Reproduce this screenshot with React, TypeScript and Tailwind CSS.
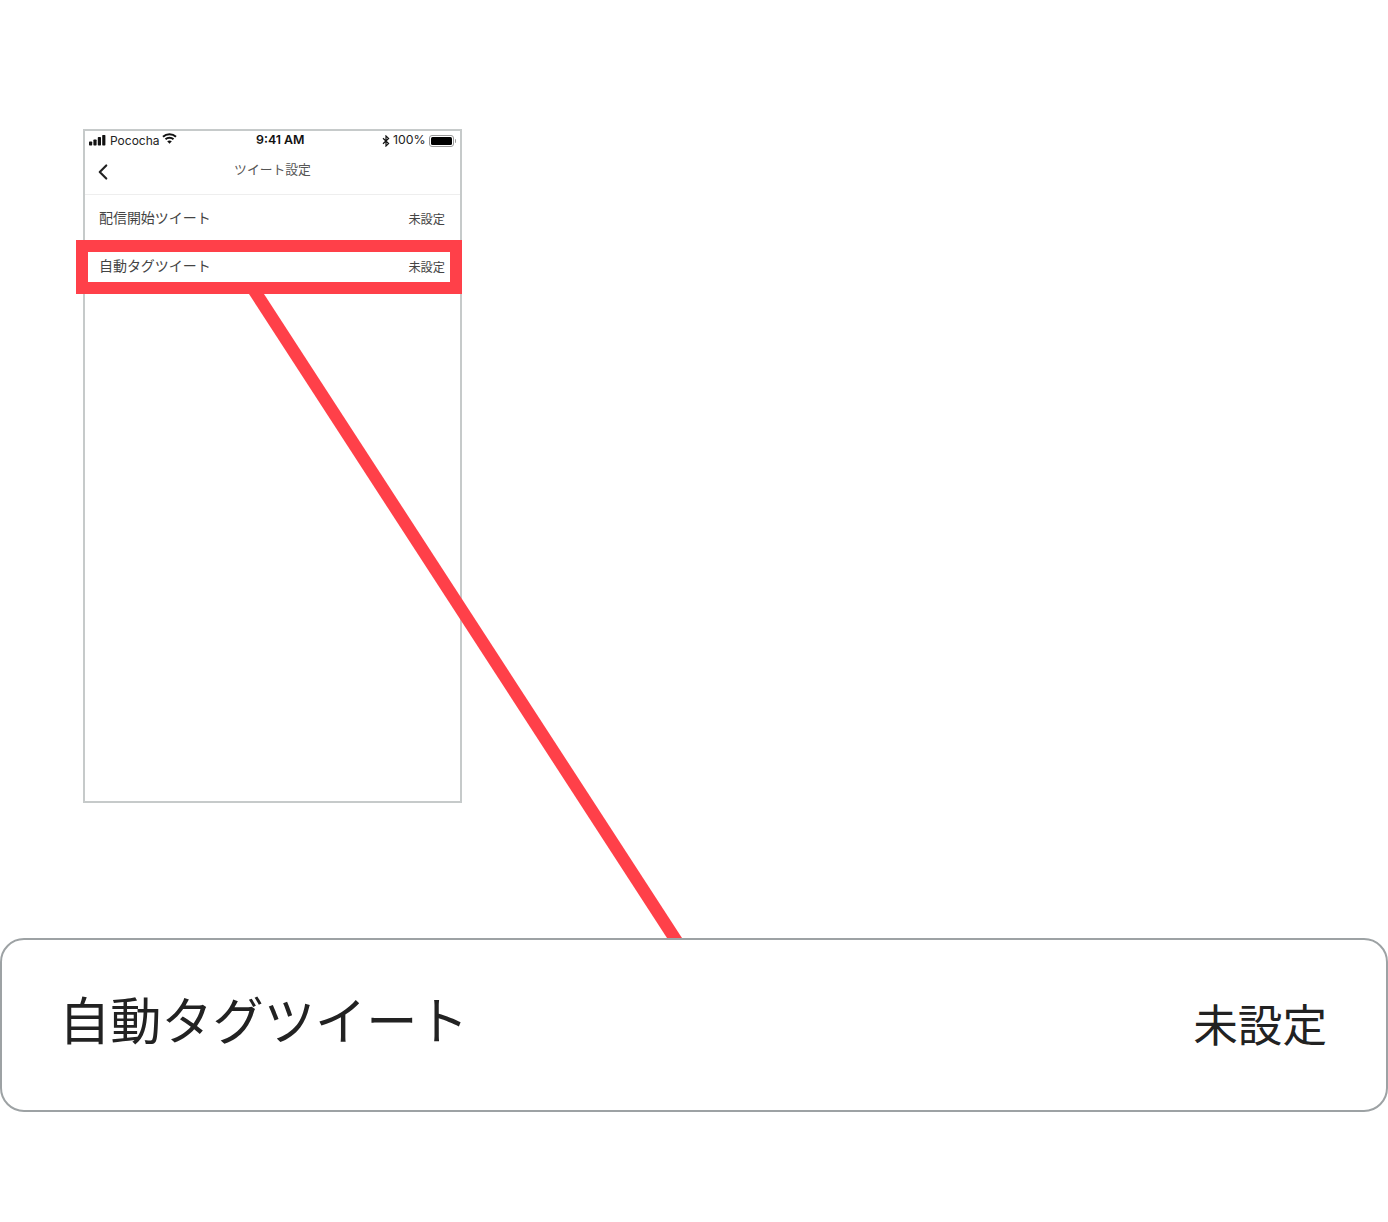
import { ChevronLeft } from "lucide-react";

const jpFont = "font-['Noto_Sans_CJK_JP','Hiragino_Sans',sans-serif]";

function SignalIcon() {
  return (
    <svg width="17" height="11" viewBox="0 0 17 11" fill="#111">
      <rect x="0" y="6.5" width="3.2" height="4" rx="0.7" />
      <rect x="4.4" y="4.5" width="3.2" height="6" rx="0.7" />
      <rect x="8.8" y="2" width="3.2" height="8.5" rx="0.7" />
      <rect x="13.2" y="0" width="3.2" height="10.5" rx="0.7" />
    </svg>
  );
}

function WifiIcon() {
  return (
    <svg width="15" height="11" viewBox="0 0 15 11" fill="none" stroke="#111" strokeWidth="2">
      <path d="M1 3.8C4.6 0.4 10.4 0.4 14 3.8" />
      <path d="M3.5 6.2C5.7 4.2 9.3 4.2 11.5 6.2" />
      <path d="M7.5 10.8L5.2 8.3C6.5 7.3 8.5 7.3 9.8 8.3Z" fill="#111" stroke="none" />
    </svg>
  );
}

function BluetoothIcon() {
  return (
    <svg width="8" height="12" viewBox="0 0 8 12" fill="none" stroke="#111" strokeWidth="1.2">
      <path d="M1 3.2L6.6 8.6L4 11V1L6.6 3.4L1 8.8" />
    </svg>
  );
}

function BatteryIcon() {
  return (
    <div className="flex items-center">
      <div className="w-[25px] h-[12px] rounded-[3px] border border-[#999] p-[1px]">
        <div className="w-full h-full rounded-[1.5px] bg-black" />
      </div>
      <div className="w-[1.5px] h-[4px] ml-[1px] rounded-r-sm bg-[#999]" />
    </div>
  );
}

function StatusBar() {
  return (
    <div className="relative h-[20px] flex items-center justify-between pl-[4px] pr-[4px] font-['Inter',sans-serif] text-[12px] text-[#222]">
      <div className="flex items-center gap-[4px]">
        <span className="-mt-[2px]">
          <SignalIcon />
        </span>
        <span className="-mt-[1px]">Pococha</span>
        <span className="-mt-[5px] -ml-[2px]">
          <WifiIcon />
        </span>
      </div>
      <span className="absolute left-[171px] -mt-[1px] text-[12.4px] font-semibold text-[#111]">9:41 AM</span>
      <div className="flex items-center gap-[3px] -mt-[1px]">
        <BluetoothIcon />
        <span className="text-[12.3px]">100%</span>
        <BatteryIcon />
      </div>
    </div>
  );
}

function Row({ label }: { label: string }) {
  return (
    <div className={`h-[48px] flex items-center justify-between pl-[14px] pr-[15px] text-[#444] ${jpFont}`}>
      <span className="text-[14px] tracking-[-0.05px] -mt-[3px]">{label}</span>
      <span className="text-[12.2px] mt-[1px]">未設定</span>
    </div>
  );
}

export default function App() {
  return (
    <div className="relative w-[1388px] h-[1222px] bg-white overflow-hidden">
      <div className="pt-[129px] pl-[83px]">
        {/* phone frame */}
        <div className="w-[379px] h-[674px] border-2 border-[#c6caca] bg-white">
          <StatusBar />
          <div className={`relative h-[44px] flex items-center justify-center border-b border-[#eeeeee] ${jpFont}`}>
            <ChevronLeft size={26} strokeWidth={2} color="#222" className="absolute left-[5px] top-[8px]" />
            <span className="text-[12.8px] text-[#555] -mt-[8px]">ツイート設定</span>
          </div>
          <Row label="配信開始ツイート" />
          <Row label="自動タグツイート" />
        </div>

        {/* enlarged row */}
        <div className={`-ml-[83px] mt-[135px] w-[1388px] h-[174px] flex items-center justify-between pl-[57px] pr-[59px] rounded-[24px] border-2 border-[#9da2a4] bg-white text-[#222] ${jpFont}`}>
          <span className="text-[51.2px] -mt-[14px]">自動タグツイート</span>
          <span className="text-[44.6px] -mt-[4px]">未設定</span>
        </div>
      </div>

      {/* callout */}
      <div className="absolute left-[76px] top-[240px] w-[386px] h-[54px] border-[12px] border-[#ff4049]" />
      <svg className="absolute left-0 top-0" width="1388" height="1222" fill="none">
        <polygon points="249,294 264,294 682,938 667,938" fill="#ff4049" />
      </svg>
    </div>
  );
}
